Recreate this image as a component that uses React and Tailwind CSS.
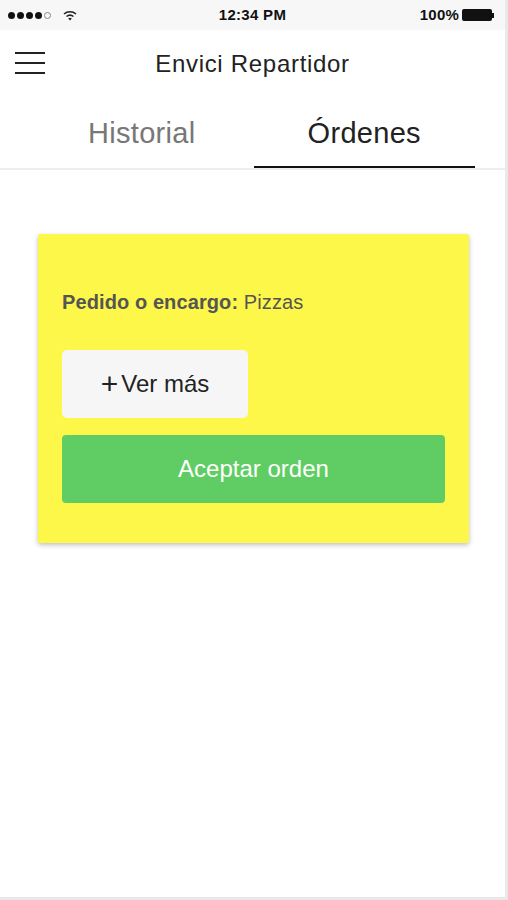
import React from 'react';

const font = { fontFamily: '"Liberation Sans", Arial, sans-serif' };

function StatusBar() {
  return (
    <div className="h-[30px] bg-[#f7f7f7] flex items-center px-[8px] text-[15px] text-[#111]">
      <div className="flex items-center gap-[2px] w-[160px]">
        {[0, 1, 2, 3].map((i) => (
          <span key={i} className="w-[7px] h-[7px] rounded-full bg-[#111]" />
        ))}
        <span className="w-[7px] h-[7px] rounded-full border border-[#888]" />
        <svg className="ml-[10px]" width="14" height="11" viewBox="0 0 14 11">
          <path d="M1 4 A9 9 0 0 1 13 4" stroke="#222" strokeWidth="1.6" fill="none" />
          <path d="M3.5 6.5 A5.5 5.5 0 0 1 10.5 6.5" stroke="#222" strokeWidth="1.6" fill="none" />
          <path d="M5.2 8.6 L7 10.6 L8.8 8.6 A2.6 2.6 0 0 0 5.2 8.6 Z" fill="#222" />
        </svg>
      </div>
      <div className="flex-1 text-center font-semibold tracking-[0.3px]">12:34 PM</div>
      <div className="w-[160px] flex items-center justify-end gap-[3px] pr-[3px]">
        <span className="font-semibold tracking-[0.2px]">100%</span>
        <div className="flex items-center">
          <div className="w-[30px] h-[12px] bg-[#111] rounded-[2px]" />
          <div className="w-[2px] h-[5px] bg-[#111]" />
        </div>
      </div>
    </div>
  );
}

export default function App() {
  return (
    <div style={font} className="w-[508px] h-[900px] bg-white relative overflow-hidden border-r-[3px] border-b-[3px] border-[#e9e9e9]">
      <StatusBar />

      <div className="h-[66px] flex items-center relative">
        <div className="absolute left-[15px] top-[22px] flex flex-col gap-[8px]">
          <span className="block w-[30px] h-[2px] bg-[#222]" />
          <span className="block w-[30px] h-[2px] bg-[#222]" />
          <span className="block w-[30px] h-[2px] bg-[#222]" />
        </div>
        <div className="flex-1 text-center text-[24px] tracking-[0.7px] text-[#222] pt-[1px]">Envici Repartidor</div>
      </div>

      <div className="flex border-b-[2px] border-[#eeeeee] px-[30px]">
        <div className="w-[224px] h-[72px] flex items-center justify-center text-[29px] tracking-[0.3px] text-[#777] pt-[3px]">
          Historial
        </div>
        <div className="w-[222px] h-[72px] flex items-center justify-center text-[29px] tracking-[0.3px] text-[#222] border-b-[2px] border-[#111] mb-[-2px] pt-[5px]">
          Órdenes
        </div>
      </div>

      <div className="pt-[64px] px-[38px] pr-[36px]">
        <div className="bg-[#fdf74a] rounded-[2px] shadow-[0_2px_5px_rgba(0,0,0,0.25)] px-[24px] pt-[54px] pb-[40px]">
          <p className="text-[20px] leading-[28px] text-[#555] tracking-[0.1px]">
            <span className="font-bold">Pedido o encargo:</span> Pizzas
          </p>
          <button className="mt-[34px] w-[186px] h-[68px] bg-[#f6f6f6] rounded-[5px] text-[24px] text-[#222] flex items-center justify-center">
            <span className="text-[30px] leading-none mr-[3px] font-light">+</span>Ver más
          </button>
          <button className="mt-[17px] w-full h-[68px] bg-[#5fcd63] rounded-[4px] text-[24px] text-white">
            Aceptar orden
          </button>
        </div>
      </div>
    </div>
  );
}
